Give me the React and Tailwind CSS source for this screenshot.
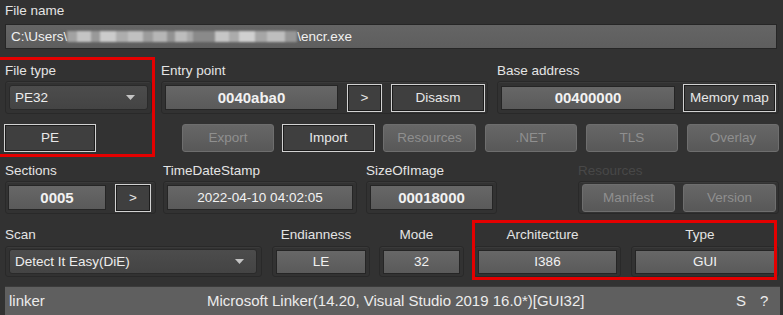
import React from 'react';

// pixelated (censored) part of the path
const blur = [
  [10, '#a2a2a2'], [14, '#c4c4c4'], [9, '#999'], [16, '#cbcbcb'], [12, '#adadad'],
  [15, '#c0c0c0'], [10, '#9c9c9c'], [14, '#b6b6b6'], [8, '#929292'], [12, '#bdbdbd'],
  [6, '#a8a8a8'], [22, '#8a8a8a'], [14, '#c6c6c6'], [10, '#ababab'], [16, '#d0d0d0'],
  [12, '#a6a6a6'], [18, '#bebebe'], [12, '#979797'],
];

function Frame({ className = '', children }) {
  return (
    <div className={`flex items-center border border-[#292929] rounded-[3px] shadow-[inset_0_1px_0_#3a3a3a] ${className}`}>
      {children}
    </div>
  );
}

function Val({ className = '', bold, children }) {
  return (
    <div className={`flex items-center justify-center border border-[#252525] bg-[linear-gradient(#676767,#5a5a5a)] text-[#f2f2f2] ${bold ? 'font-bold text-[15px]' : ''} ${className}`}>
      {children}
    </div>
  );
}

function Btn({ className = '', children }) {
  return (
    <div className={`h-[28px] flex items-center justify-center border border-[#d2d2d2] bg-[#3f3f3f] shadow-[inset_0_0_0_1px_#1c1c1c] text-[#e8e8e8] ${className}`}>
      {children}
    </div>
  );
}

function Off({ className = '', children }) {
  return (
    <div className={`h-[28px] flex items-center justify-center rounded-[3px] border border-[#6e6e6e] bg-[linear-gradient(#676767,#585858)] text-[#8f8f8f] ${className}`}>
      {children}
    </div>
  );
}

function Combo({ className = '', children }) {
  return (
    <div className={`flex items-center justify-between pl-[5px] pr-[12px] rounded-[3px] border border-[#2a2a2a] bg-[linear-gradient(#4c4c4c,#444)] text-[#ededed] ${className}`}>
      <span>{children}</span>
      <svg width="9" height="5" viewBox="0 0 9 5"><path d="M0 0h9L4.5 5z" fill="#c4c4c4" /></svg>
    </div>
  );
}

export default function App() {
  return (
    <div className="relative w-[783px] h-[315px] overflow-hidden bg-[#323232] text-[#e4e4e4] text-[13.5px] leading-[16px] font-['Liberation_Sans',Arial,sans-serif]">
      {/* File name */}
      <div className="pl-[5px] pt-[3px] h-[19px]">File name</div>
      <div className="mt-[5px] ml-[5px] w-[772px] h-[25px] flex items-center pl-[5px] border border-[#262626] bg-[linear-gradient(#656565,#5e5e5e)] text-[#f0f0f0]">
        <span>C:\Users\</span>
        <span className="flex h-[11px] blur-[1.2px]">
          {blur.map(([w, c], i) => (
            <span key={i} style={{ width: w, background: c }} />
          ))}
        </span>
        <span>\encr.exe</span>
      </div>

      {/* row 1 labels */}
      <div className="mt-[14px] h-[16px] flex">
        <div className="w-[161px] pl-[5px]">File type</div>
        <div className="w-[336px]">Entry point</div>
        <div>Base address</div>
      </div>

      {/* row 1 controls */}
      <div className="mt-[2px] h-[33px] flex">
        <Frame className="ml-[5px] w-[147px] pl-[3px]">
          <Combo className="w-[139px] h-[25px]">PE32</Combo>
        </Frame>
        <Frame className="ml-[9px] w-[327px] pl-[3px]">
          <Val bold className="w-[173px] h-[25px]">0040aba0</Val>
          <Btn className="ml-[9px] w-[35px]">&gt;</Btn>
          <Btn className="ml-[9px] w-[94px]">Disasm</Btn>
        </Frame>
        <Frame className="ml-[9px] w-[282px] pl-[3px]">
          <Val bold className="w-[174px] h-[24px]">00400000</Val>
          <Btn className="ml-[8px] w-[93px]">Memory map</Btn>
        </Frame>
      </div>

      {/* row 2 */}
      <div className="mt-[10px] h-[28px] flex">
        <Btn className="ml-[4px] w-[92px]">PE</Btn>
        <Off className="ml-[86px] w-[92px]">Export</Off>
        <Btn className="ml-[8px] w-[93px]">Import</Btn>
        <Off className="ml-[8px] w-[93px]">Resources</Off>
        <Off className="ml-[9px] w-[92px]">.NET</Off>
        <Off className="ml-[9px] w-[92px]">TLS</Off>
        <Off className="ml-[9px] w-[92px]">Overlay</Off>
      </div>

      {/* row 3 labels */}
      <div className="mt-[11px] h-[16px] flex">
        <div className="w-[163px] pl-[5px]">Sections</div>
        <div className="w-[203px]">TimeDateStamp</div>
        <div className="w-[212px]">SizeOfImage</div>
        <div className="text-[#484848]">Resources</div>
      </div>

      {/* row 3 controls */}
      <div className="mt-[2px] h-[33px] flex">
        <Frame className="ml-[5px] w-[151px] pl-[2px]">
          <Val bold className="w-[98px] h-[25px]">0005</Val>
          <Btn className="ml-[9px] w-[36px]">&gt;</Btn>
        </Frame>
        <Frame className="ml-[7px] w-[194px] pl-[3px]">
          <Val className="w-[186px] h-[25px]">2022-04-10 04:02:05</Val>
        </Frame>
        <Frame className="ml-[9px] w-[131px] pl-[3px]">
          <Val bold className="w-[123px] h-[25px]">00018000</Val>
        </Frame>
        <Frame className="ml-[81px] w-[201px] pl-[3px]">
          <Off className="w-[93px]">Manifest</Off>
          <Off className="ml-[8px] w-[93px]">Version</Off>
        </Frame>
      </div>

      {/* row 4 labels */}
      <div className="mt-[13px] h-[16px] flex">
        <div className="w-[267px] pl-[5px]">Scan</div>
        <div className="w-[98px] text-center">Endianness</div>
        <div className="ml-[9px] w-[85px] text-center">Mode</div>
        <div className="ml-[10px] w-[147px] text-center">Architecture</div>
        <div className="ml-[10px] w-[148px] text-center">Type</div>
      </div>

      {/* row 4 controls */}
      <div className="mt-[3px] h-[31px] flex">
        <Frame className="ml-[5px] w-[257px] pl-[3px]">
          <Combo className="w-[248px] h-[25px]">Detect It Easy(DiE)</Combo>
        </Frame>
        <Frame className="ml-[10px] w-[98px] pl-[3px]">
          <Val className="w-[90px] h-[24px]">LE</Val>
        </Frame>
        <Frame className="ml-[9px] w-[85px] pl-[3px]">
          <Val className="w-[77px] h-[24px]">32</Val>
        </Frame>
        <Frame className="ml-[10px] w-[147px] pl-[3px]">
          <Val className="w-[139px] h-[24px]">I386</Val>
        </Frame>
        <Frame className="ml-[10px] w-[148px] pl-[3px]">
          <Val className="w-[140px] h-[24px]">GUI</Val>
        </Frame>
      </div>

      {/* result line */}
      <div className="mt-[9px] ml-[5px] w-[775px] h-[34px] flex pt-[6px] bg-[#5f5f5f] border-t border-[#3b3b3b] text-[#ececec] text-[15px]">
        <div className="w-[202px] pl-[4px]">linker</div>
        <div className="w-[529px]">Microsoft Linker(14.20, Visual Studio 2019 16.0*)[GUI32]</div>
        <div className="w-[24px]">S</div>
        <div>?</div>
      </div>

      {/* red annotation boxes */}
      <div className="absolute left-[-3px] top-[57px] w-[158px] h-[100px] border-[3px] border-[#e40000]" />
      <div className="absolute left-[472px] top-[220px] w-[305px] h-[60px] border-[3px] border-[#e40000]" />
    </div>
  );
}
